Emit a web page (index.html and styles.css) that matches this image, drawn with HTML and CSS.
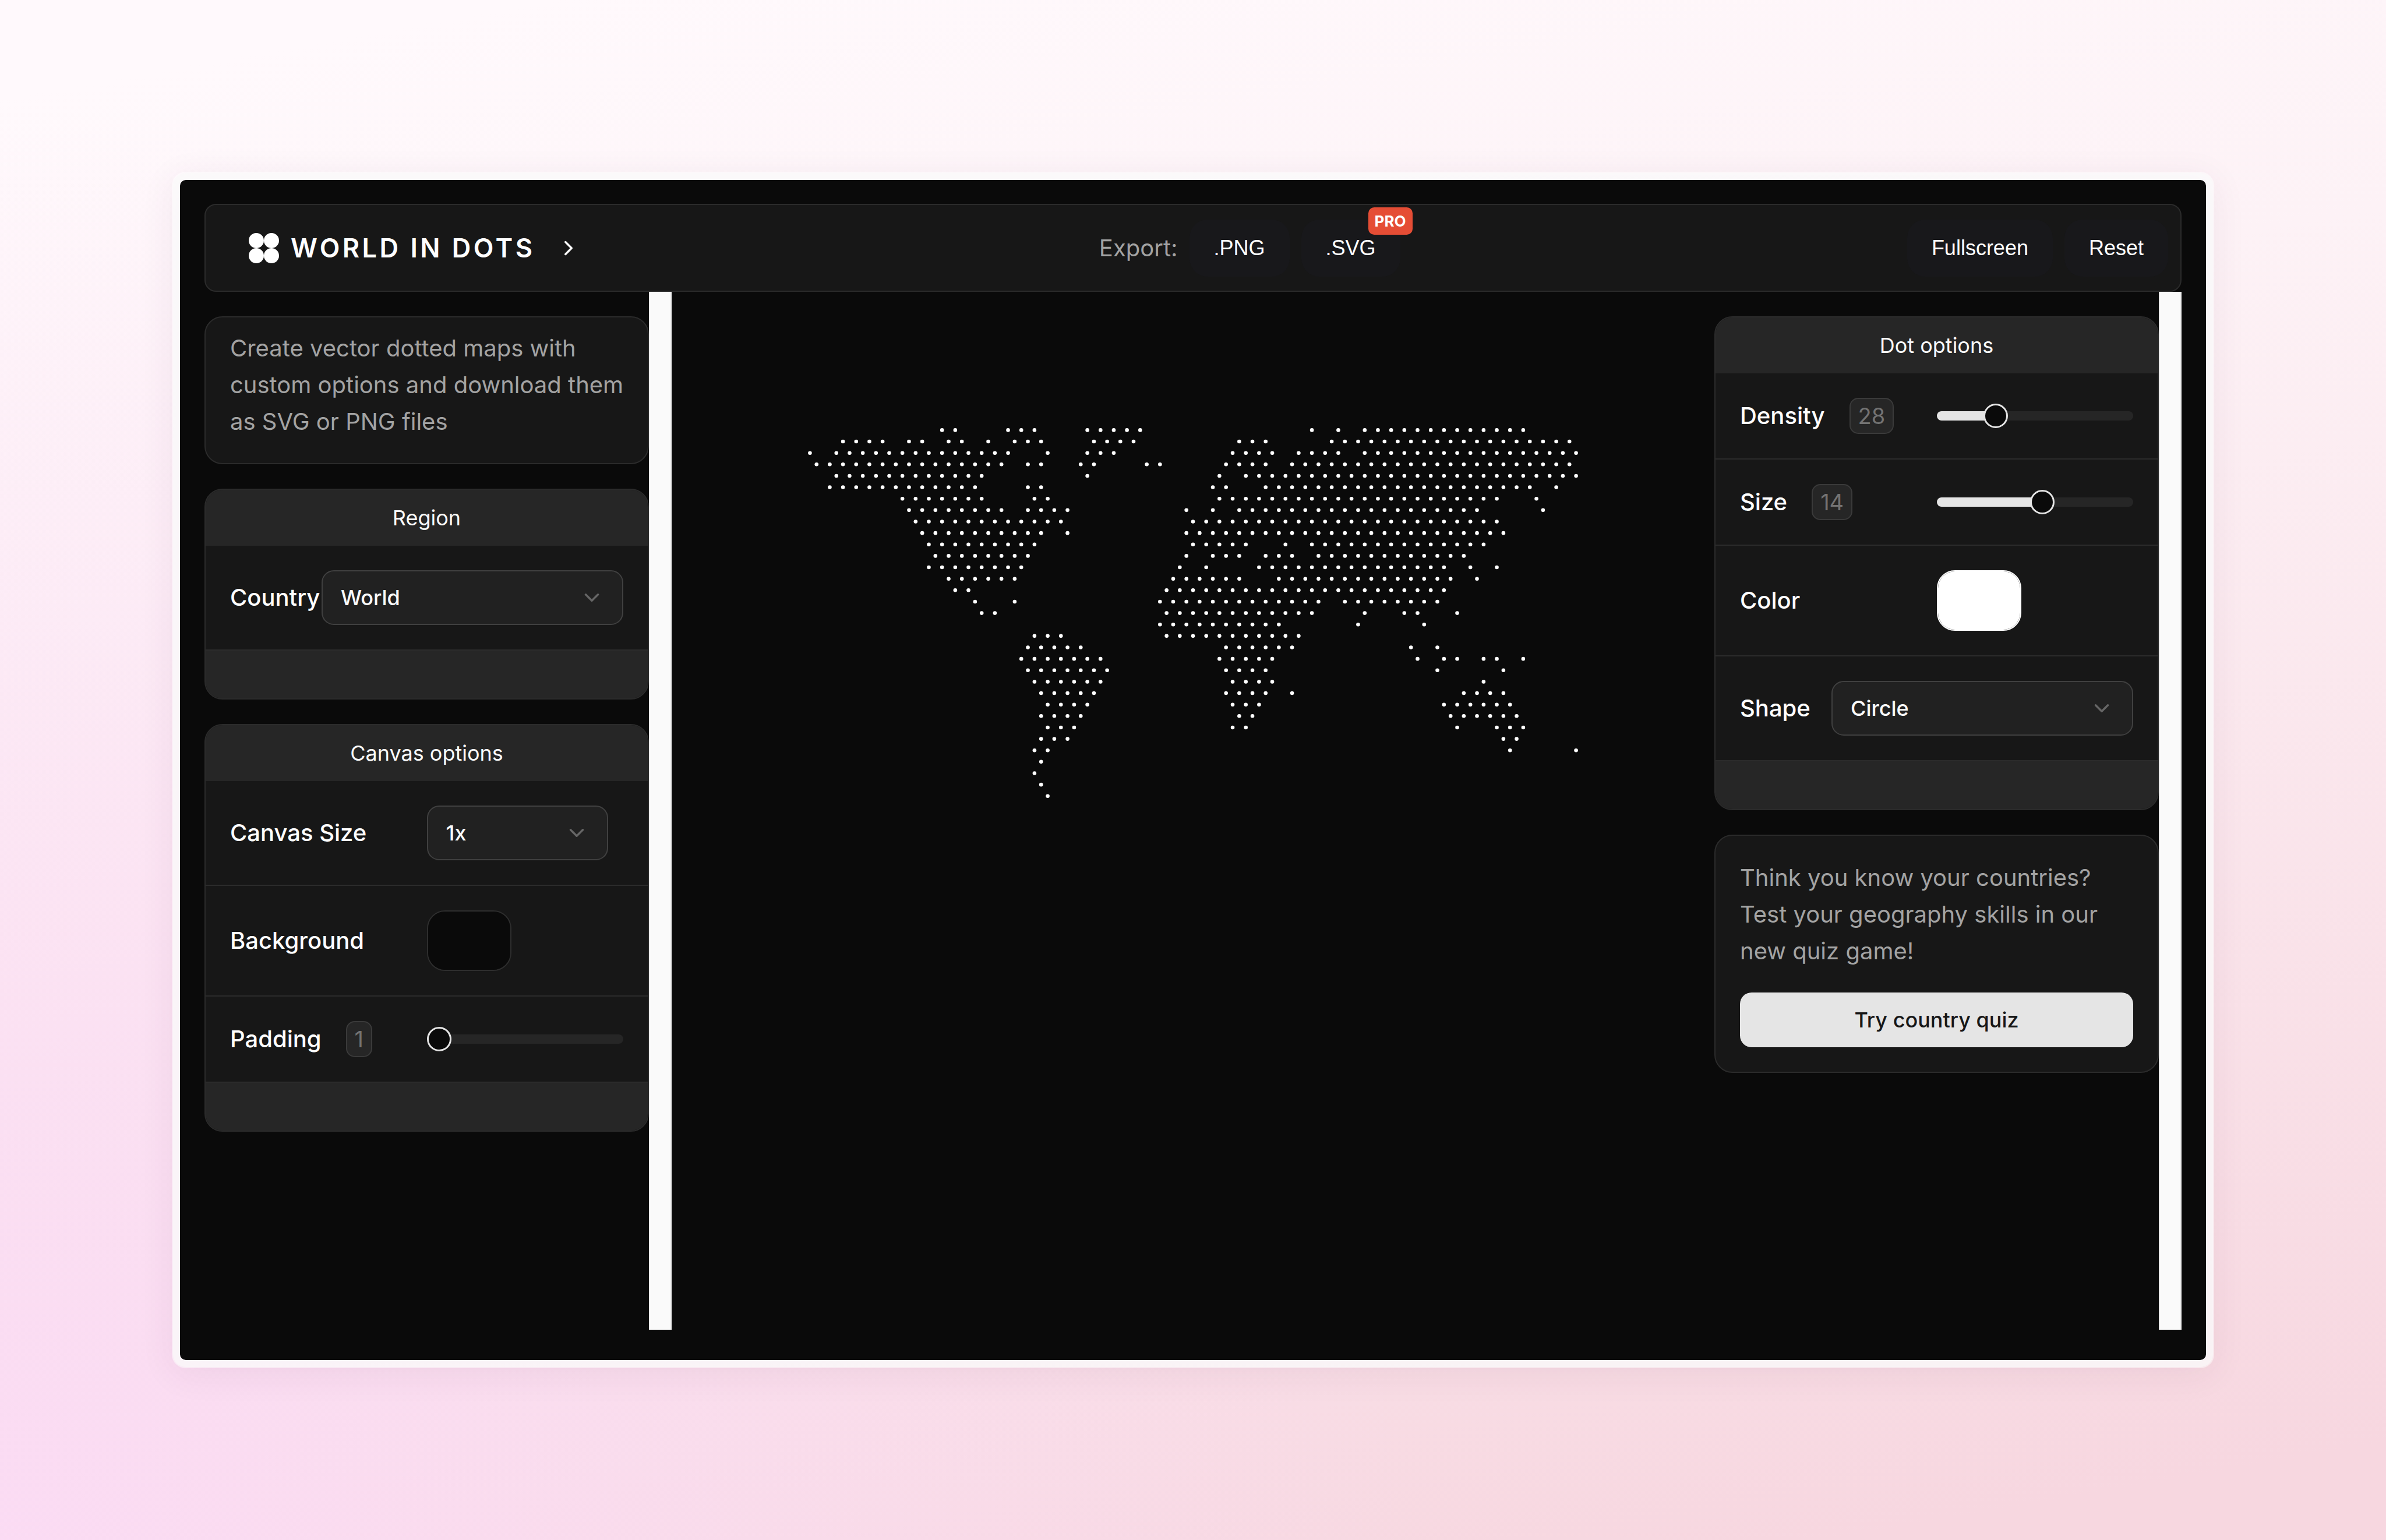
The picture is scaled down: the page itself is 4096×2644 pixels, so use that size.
FILE: index.html
```
<!DOCTYPE html>
<html lang="en">
<head>
    <meta charset="UTF-8">
    <meta name="viewport" content="width=device-width, initial-scale=1.0">
    <title>World in Dots</title>
    <link rel="stylesheet" href="styles.css">
</head>
<body>
    <div class="app">
        <header class="topbar">
            <div class="brand">
                <svg class="logo" viewBox="0 0 52 52" aria-hidden="true">
                    <circle cx="13" cy="13" r="13"/>
                    <circle cx="39" cy="13" r="13"/>
                    <circle cx="13" cy="39" r="13"/>
                    <circle cx="39" cy="39" r="13"/>
                </svg>
                <h1>WORLD IN DOTS</h1>
                <svg class="brand-arrow" viewBox="0 0 24 24" aria-hidden="true"><path d="M9 18l6-6-6-6"/></svg>
            </div>
            <div class="actions">
                <span class="export-label">Export:</span>
                <button type="button" class="btn">.PNG</button>
                <button type="button" class="btn">.SVG<span class="pro">PRO</span></button>
            </div>
            <div class="actions">
                <button type="button" class="btn">Fullscreen</button>
                <button type="button" class="btn">Reset</button>
            </div>
        </header>

        <div class="workspace">
            <aside class="sidebar">
                <div class="panels">
                    <section class="card intro">
                        <p>Create vector dotted maps with custom options and download them as SVG or PNG files</p>
                    </section>

                    <section class="card">
                        <h2>Region</h2>
                        <div class="row">
                            <label for="country">Country</label>
                            <div class="select wide">
                                <select id="country"><option>World</option></select>
                                <svg viewBox="0 0 24 24" aria-hidden="true"><path d="M6 9l6 6 6-6"/></svg>
                            </div>
                        </div>
                        <div class="card-footer"></div>
                    </section>

                    <section class="card">
                        <h2>Canvas options</h2>
                        <div class="row split">
                            <label for="canvasSize">Canvas Size</label>
                            <div class="select">
                                <select id="canvasSize"><option>1x</option></select>
                                <svg viewBox="0 0 24 24" aria-hidden="true"><path d="M6 9l6 6 6-6"/></svg>
                            </div>
                        </div>
                        <div class="row split">
                            <label for="background">Background</label>
                            <input type="color" id="background" value="#0a0a0a">
                        </div>
                        <div class="row split">
                            <label for="padding">Padding <output>1</output></label>
                            <input type="range" id="padding" min="1" max="20" value="1" style="--fill: 0%">
                        </div>
                        <div class="card-footer"></div>
                    </section>
                </div>
                <div class="track"></div>
            </aside>

            <main class="canvas">
                <svg id="map" viewBox="-3 -3 1166 561" role="img" aria-label="Dotted world map"></svg>
            </main>

            <aside class="sidebar">
                <div class="panels">
                    <section class="card">
                        <h2>Dot options</h2>
                        <div class="row split">
                            <label for="density">Density <output>28</output></label>
                            <input type="range" id="density" min="1" max="100" value="28" style="--fill: 30%">
                        </div>
                        <div class="row split">
                            <label for="size">Size <output>14</output></label>
                            <input type="range" id="size" min="1" max="25" value="14" style="--fill: 54%">
                        </div>
                        <div class="row split">
                            <label for="color">Color</label>
                            <input type="color" id="color" class="light" value="#ffffff">
                        </div>
                        <div class="row">
                            <label for="shape">Shape</label>
                            <div class="select wide">
                                <select id="shape"><option>Circle</option></select>
                                <svg viewBox="0 0 24 24" aria-hidden="true"><path d="M6 9l6 6 6-6"/></svg>
                            </div>
                        </div>
                        <div class="card-footer"></div>
                    </section>

                    <section class="card promo">
                        <p>Think you know your countries? Test your geography skills in our new quiz game!</p>
                        <button type="button" class="btn-light">Try country quiz</button>
                    </section>
                </div>
                <div class="track"></div>
            </aside>
        </div>
    </div>

    <script>
        // One string per row, ranges of grid columns. Rows are staggered, so columns go in steps of two.
        const rows = [
            '20-22 30-34 42-50 76 80 84-108',
            '5-11 15-17 21-23 27 31-35 43-49 65-69 79-115',
            '0 4-30 36 42-46 64-70 74-80 84-116',
            '1-29 33-35 41-43 51-53 63-69 73-115',
            '4-26 42 62 66-116',
            '3-25 33-35 61-63 69-109 113',
            '14-26 34-36 62-104 110',
            '15-29 33-39 57 61 65-101 111',
            '16-38 58-104',
            '17-35 39 57-105',
            '18-34 58-66 72 76-102',
            '19-33 57 61-65 69-73 77-99',
            '18-32 56 60 68-96 100 104',
            '21-31 55-65 71-97 101',
            '22-24 54-96',
            '25 31 53-77 81-95',
            '26-28 54-76 84 90-92 98',
            '53-71 83 93',
            '34-38 54-74',
            '33-41 63-73 91 95',
            '32-44 62-70 92 96-98 102-104 108',
            '33-45 63-69 95 105',
            '34-44 64-70 102',
            '35-43 63-69 73 99-105',
            '36-42 64-68 96-106',
            '35-41 65-67 97-107',
            '36-40 64-66 98 104-108',
            '35-39 105-107',
            '34-36 106 116',
            '35',
            '34',
            '35',
            '36'
        ];

        const map = document.getElementById('map');
        rows.forEach((row, y) => {
            row.split(' ').forEach(range => {
                const [from, to = from] = range.split('-').map(Number);
                for (let x = from; x <= to; x += 2) {
                    const dot = document.createElementNS('http://www.w3.org/2000/svg', 'circle');
                    dot.setAttribute('cx', x * 10);
                    dot.setAttribute('cy', y * 17.32);
                    dot.setAttribute('r', 2.9);
                    map.appendChild(dot);
                }
            });
        });

        document.querySelectorAll('input[type=range]').forEach(input => {
            input.addEventListener('input', () => {
                const percent = (input.value - input.min) / (input.max - input.min) * 100;
                input.style.setProperty('--fill', percent + '%');
                document.querySelector(`label[for=${input.id}] output`).innerText = input.value;
            });
        });
    </script>
</body>
</html>
```

FILE: styles.css
```
* {
    box-sizing: border-box;
}

body {
    display: flex;
    min-height: 100vh;
    margin: 0;
    padding: 309px;
    font-family: Inter, "Liberation Sans", sans-serif;
    font-size: 40px;
    line-height: 63px;
    color: #fafafa;
    background:
        radial-gradient(circle at 0% 100%, rgba(251, 219, 245, 0.9), rgba(251, 219, 245, 0) 50%),
        linear-gradient(170deg, #fff9fc 5%, #fdf2f6 32%, #f7d7e0 95%);
}

h1, h2, p {
    margin: 0;
    font-weight: 400;
}

button, select, input {
    margin: 0;
    font-family: inherit;
    color: inherit;
}

.app {
    flex: 1;
    display: flex;
    flex-direction: column;
    min-width: 0;
    padding: 41px 42px 52px;
    background: #0a0a0a;
    border-radius: 10px;
    box-shadow: 0 0 0 12px rgba(250, 250, 250, 0.6), 0 0 0 14px rgba(255, 255, 255, 0.5), 0 10px 60px 14px rgba(90, 40, 80, 0.07);
}

.topbar {
    display: flex;
    align-items: center;
    justify-content: space-between;
    height: 151px;
    padding: 0 21px;
    background: #171717;
    border: 2px solid #2b2b2b;
    border-radius: 20px;
}

.brand {
    display: flex;
    align-items: center;
    padding: 0 20px 0 53px;
}

.brand h1 {
    margin: 0 36px 0 20px;
    font-size: 45px;
    font-weight: 600;
    letter-spacing: 0.1em;
    color: #fff;
}

.logo {
    width: 52px;
    height: 52px;
    fill: #fff;
}

.brand-arrow {
    width: 42px;
    height: 42px;
}

.brand-arrow, .select svg {
    fill: none;
    stroke: #fff;
    stroke-width: 2;
    stroke-linecap: round;
    stroke-linejoin: round;
}

.actions {
    display: flex;
    align-items: center;
    gap: 20px;
}

.export-label {
    color: #a3a3a3;
}

.btn {
    position: relative;
    height: 98px;
    padding: 0 42px;
    font-family: "Liberation Sans", Arial, sans-serif;
    font-size: 36px;
    color: #fff;
    background: #18181b;
    border: none;
    border-radius: 31px;
    cursor: pointer;
}

.pro {
    position: absolute;
    top: -21px;
    right: -21px;
    padding: 0 11px;
    font-family: Inter, sans-serif;
    font-size: 26px;
    font-weight: 700;
    line-height: 47px;
    background: #e54d35;
    border-radius: 10px;
}

.workspace {
    flex: 1;
    display: flex;
}

.sidebar {
    display: flex;
    width: 802px;
}

.panels {
    flex: 1;
    display: flex;
    flex-direction: column;
    gap: 42px;
    padding-top: 42px;
}

.track {
    width: 39px;
    background: #fafafa;
    border: solid #ececec;
    border-width: 0 2px;
}

.canvas {
    flex: 1;
    padding: 234px;
}

#map {
    display: block;
    width: 100%;
    fill: #fff;
}

.card {
    overflow: hidden;
    background: #171717;
    border: 2px solid #2b2b2b;
    border-radius: 31px;
}

.card h2 {
    font-size: 36px;
    line-height: 96px;
    text-align: center;
    background: #262626;
}

.card p {
    color: #a3a3a3;
}

.intro {
    padding: 21px 21px 40px 42px;
}

.promo {
    padding: 40px 42px 42px;
}

.row {
    display: flex;
    align-items: center;
    justify-content: space-between;
    padding: 42px;
    border-bottom: 2px solid #2b2b2b;
}

.split {
    display: grid;
    grid-template-columns: 1fr 1fr;
}

.row label {
    display: flex;
    align-items: center;
    gap: 42px;
    font-weight: 500;
    line-height: 62px;
    color: #fff;
}

.row output {
    padding: 0 13px;
    font-size: 38px;
    font-weight: 400;
    line-height: 58px;
    color: #737373;
    background: #262626;
    border: 2px solid #3a3a3a;
    border-radius: 15px;
}

.card-footer {
    height: 82px;
    background: #262626;
}

.select {
    position: relative;
    width: 311px;
}

.select.wide {
    width: 518px;
}

.select select {
    display: block;
    width: 100%;
    height: 94px;
    padding: 0 31px;
    font-size: 36px;
    font-weight: 500;
    background: #212121;
    border: 2px solid #404040;
    border-radius: 21px;
    appearance: none;
}

.select svg {
    position: absolute;
    top: 26px;
    right: 33px;
    width: 42px;
    height: 42px;
    stroke: #666;
}

input[type=color] {
    width: 145px;
    height: 104px;
    padding: 0;
    background: none;
    border: 2px solid #2e2e2e;
    border-radius: 31px;
    overflow: hidden;
    appearance: none;
}

input[type=color].light {
    border-color: #fff;
}

input[type=color]::-webkit-color-swatch-wrapper {
    padding: 0;
}

input[type=color]::-webkit-color-swatch {
    border: none;
}

input[type=range] {
    width: 100%;
    height: 16px;
    background: linear-gradient(to right, #e5e5e5 var(--fill), #262626 var(--fill));
    border-radius: 8px;
    appearance: none;
}

input[type=range]::-webkit-slider-thumb {
    width: 42px;
    height: 42px;
    background: #0a0a0a;
    border: 3px solid #e5e5e5;
    border-radius: 50%;
    appearance: none;
}

.btn-light {
    width: 100%;
    height: 94px;
    margin-top: 40px;
    font-size: 36px;
    font-weight: 500;
    color: #171717;
    background: #e5e5e5;
    border: none;
    border-radius: 20px;
    cursor: pointer;
}
```
